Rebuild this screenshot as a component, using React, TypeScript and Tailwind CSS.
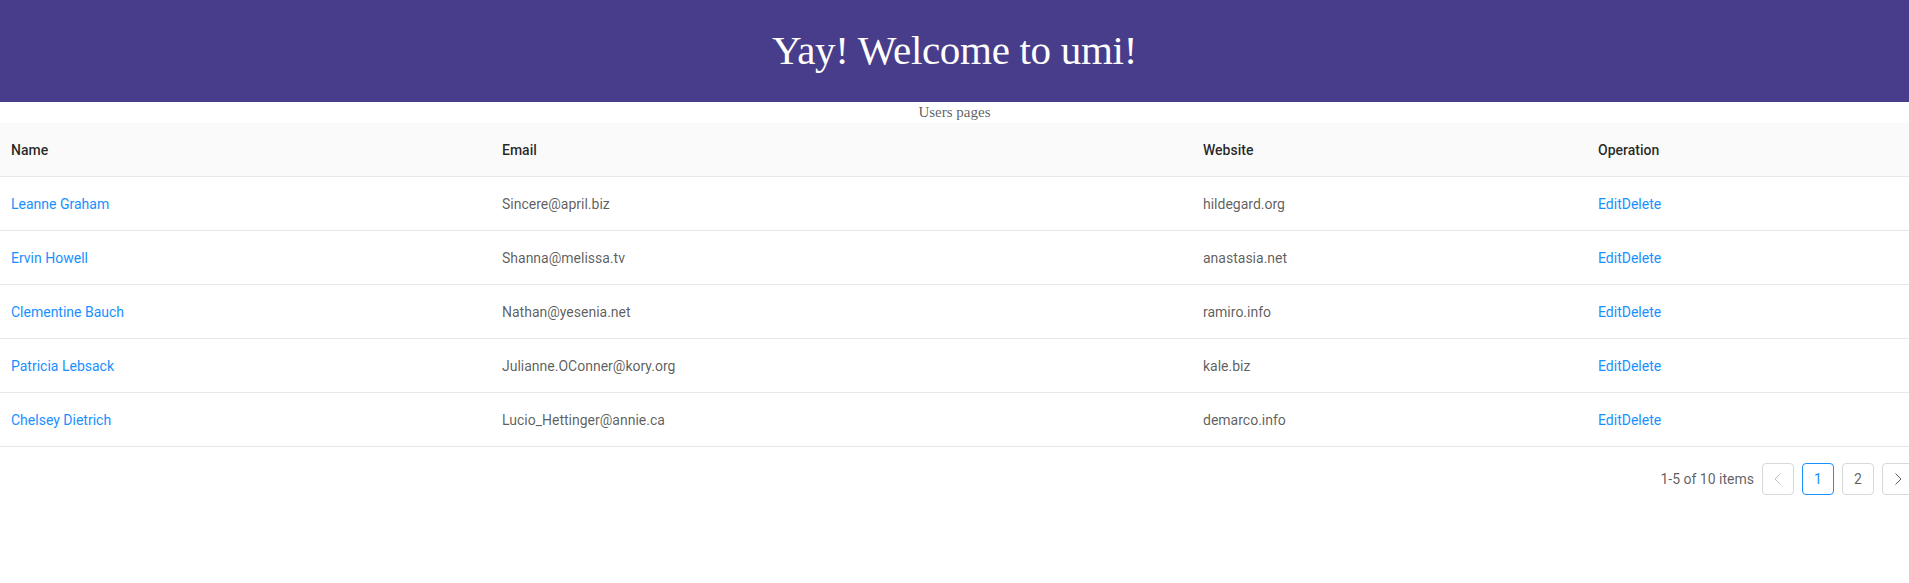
const USERS = [
  { name: 'Leanne Graham', email: 'Sincere@april.biz', website: 'hildegard.org' },
  { name: 'Ervin Howell', email: 'Shanna@melissa.tv', website: 'anastasia.net' },
  { name: 'Clementine Bauch', email: 'Nathan@yesenia.net', website: 'ramiro.info' },
  { name: 'Patricia Lebsack', email: 'Julianne.OConner@kory.org', website: 'kale.biz' },
  { name: 'Chelsey Dietrich', email: 'Lucio_Hettinger@annie.ca', website: 'demarco.info' },
];

// column grid shared by the head row and body rows
const COLS = 'grid grid-cols-[491px_701px_395px_1fr]';
const CELL = 'px-4 pt-[17px] pb-[15px]';

function Chevron({ dir, color }: { dir: 'left' | 'right'; color: string }) {
  return (
    <svg width="12" height="12" viewBox="0 0 12 12" fill="none">
      <path
        d={dir === 'left' ? 'M8.5 0.5 3 6l5.5 5.5' : 'M3.5 0.5 9 6l-5.5 5.5'}
        stroke={color}
        strokeWidth="1"
      />
    </svg>
  );
}

export default function App() {
  return (
    <div className="w-full overflow-hidden bg-white font-['Roboto',sans-serif] text-[14px] leading-[21px] text-[rgba(0,0,0,0.65)]">
      <h1 className="flex h-[102px] items-center justify-center bg-[#483d8b] pb-[2px] font-['Liberation_Serif',serif] text-[41px] font-normal tracking-[-0.3px] text-white">
        Yay! Welcome to umi!
      </h1>
      <div className="text-center font-['Liberation_Serif',serif] text-[15px] leading-[21px] text-[rgba(0,0,0,0.65)]">
        Users pages
      </div>

      <div className="ml-[-5px] w-[1919px]">
        <div className={`${COLS} border-b border-[#e8e8e8] bg-[#fafafa] font-medium text-[rgba(0,0,0,0.85)]`}>
          <div className={CELL}>Name</div>
          <div className={CELL}>Email</div>
          <div className={CELL}>Website</div>
          <div className={CELL}>Operation</div>
        </div>
        {USERS.map((u) => (
          <div key={u.email} className={`${COLS} border-b border-[#e8e8e8]`}>
            <div className={`${CELL} text-[#1890ff]`}>{u.name}</div>
            <div className={CELL}>{u.email}</div>
            <div className={CELL}>{u.website}</div>
            <div className={`${CELL} text-[#1890ff]`}>
              <span>Edit</span>
              <span>Delete</span>
            </div>
          </div>
        ))}

        <div className="mt-4 flex items-center justify-end">
          <span className="mr-2 leading-[32px]">1-5 of 10 items</span>
          <div className="mr-2 flex h-8 w-8 items-center justify-center rounded border border-[#d9d9d9]">
            <Chevron dir="left" color="rgba(0,0,0,0.25)" />
          </div>
          <div className="mr-2 flex h-8 w-8 items-center justify-center rounded border border-[#1890ff] text-[#1890ff]">
            1
          </div>
          <div className="mr-2 flex h-8 w-8 items-center justify-center rounded border border-[#d9d9d9]">
            2
          </div>
          <div className="flex h-8 w-8 items-center justify-center rounded border border-[#d9d9d9]">
            <Chevron dir="right" color="rgba(0,0,0,0.65)" />
          </div>
        </div>
      </div>
    </div>
  );
}
